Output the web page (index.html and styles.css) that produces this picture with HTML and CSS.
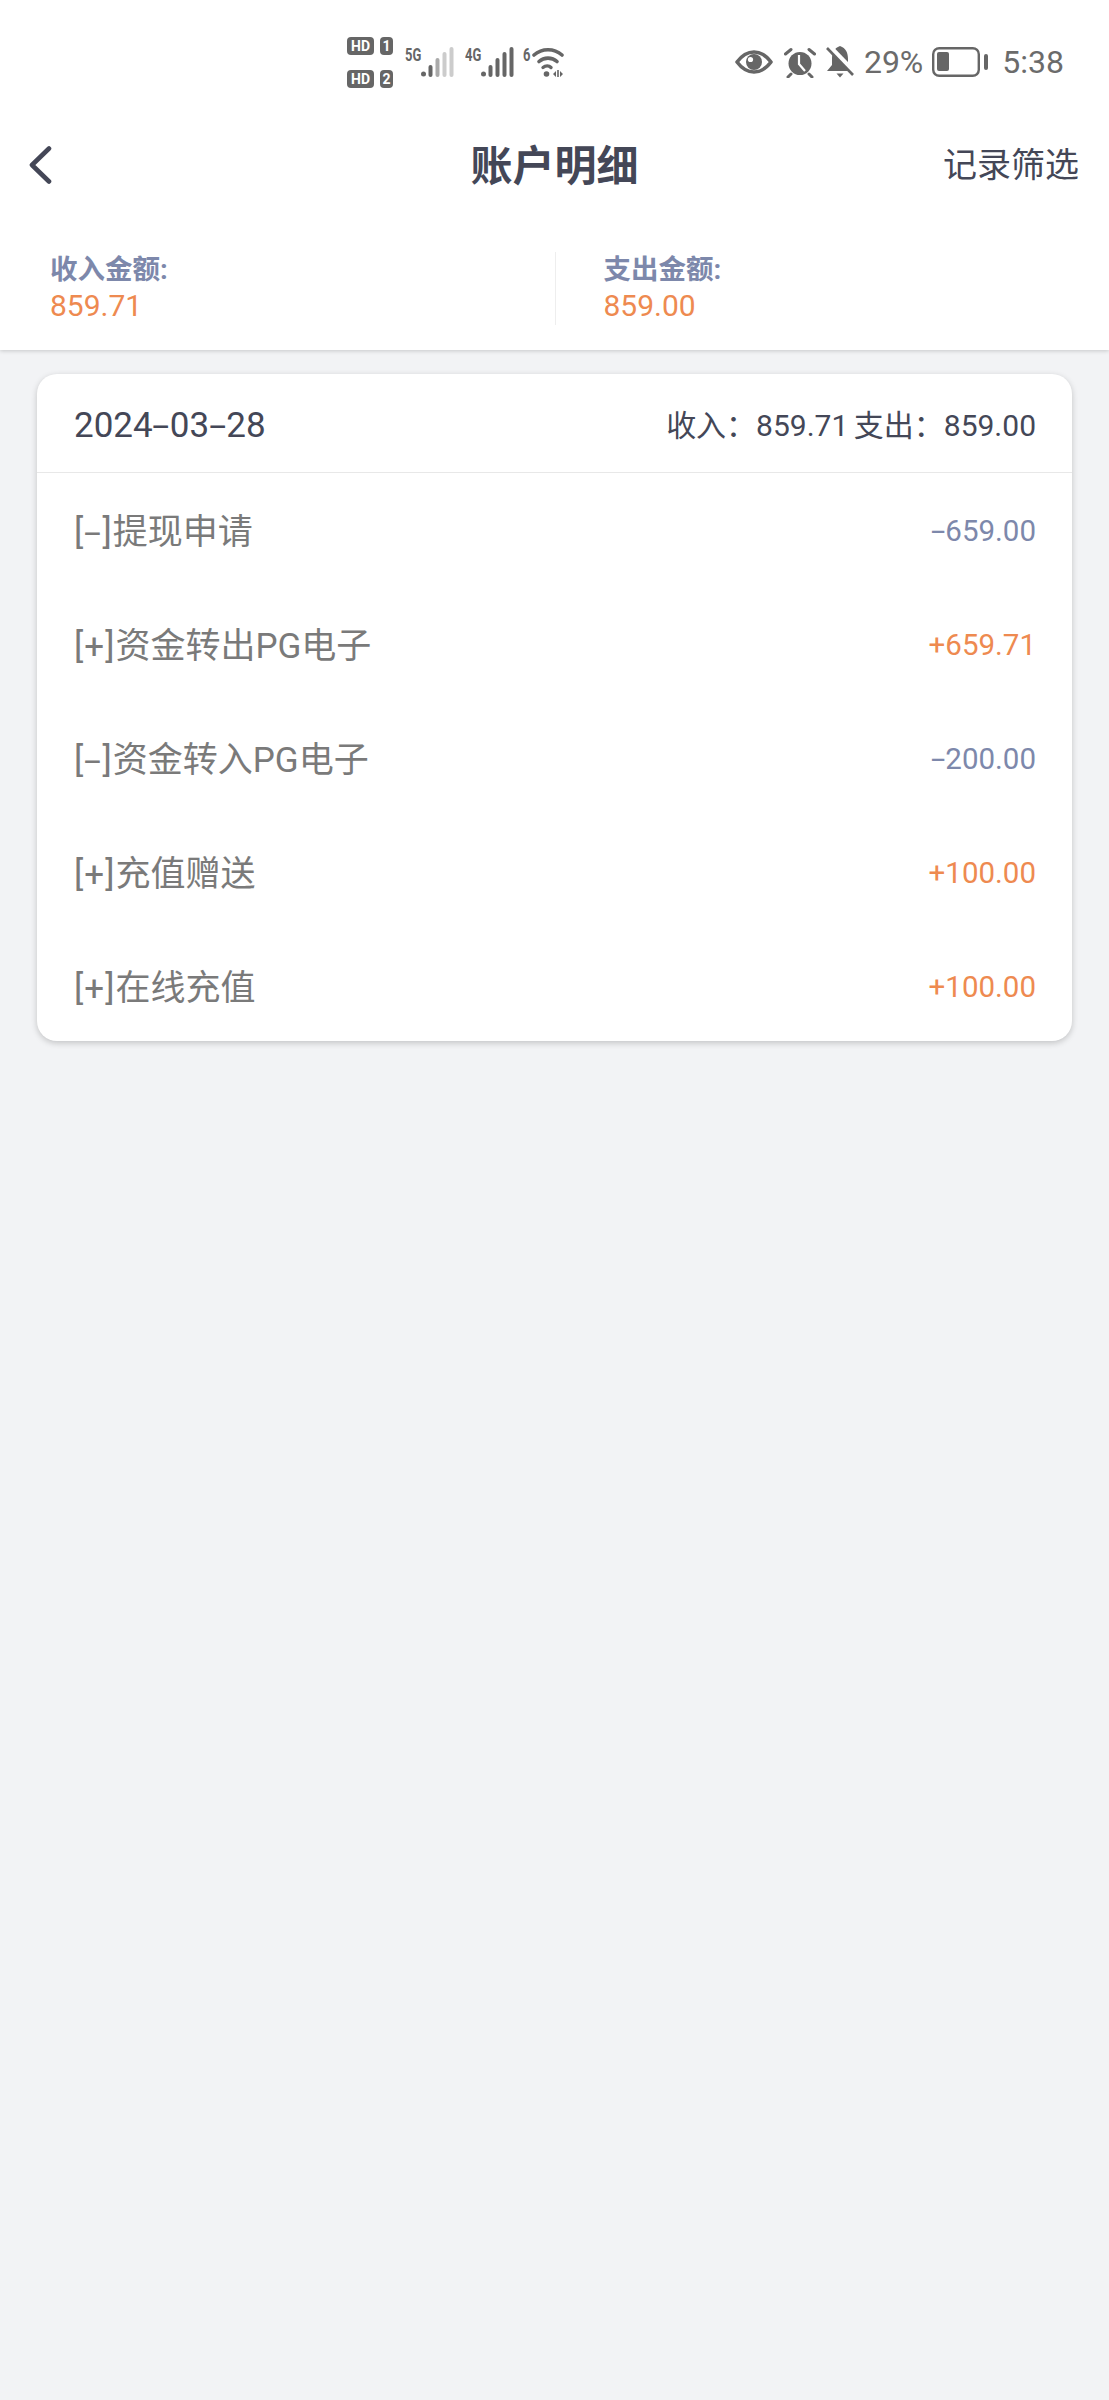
FILE: index.html
```html
<!DOCTYPE html>
<html lang="zh-CN">
<head>
    <meta charset="UTF-8">
    <meta name="viewport" content="width=device-width, initial-scale=1.0">
    <title>账户明细</title>
    <link rel="stylesheet" href="styles.css">
</head>
<body>
    <!-- Status bar -->
    <div class="status-bar">
        <div class="status-net">
            <div class="sim-col">
                <div class="sim-row"><span class="hd">HD</span><span class="sim-no">1</span></div>
                <div class="sim-row"><span class="hd">HD</span><span class="sim-no">2</span></div>
            </div>
            <div class="signal">
                <span class="net-label">5G</span>
                <svg width="33" height="30" viewBox="0 0 33 30">
                    <circle cx="2.5" cy="27" r="2.5" fill="#666"/>
                    <rect x="7.5" y="18" width="4" height="12" rx="2" fill="#666"/>
                    <rect x="14.5" y="11" width="4" height="19" rx="2" fill="#aaa"/>
                    <rect x="21.5" y="5" width="4" height="25" rx="2" fill="#ccc"/>
                    <rect x="28.5" y="0" width="4" height="30" rx="2" fill="#ccc"/>
                </svg>
            </div>
            <div class="signal">
                <span class="net-label">4G</span>
                <svg width="33" height="30" viewBox="0 0 33 30">
                    <circle cx="2.5" cy="27" r="2.5" fill="#666"/>
                    <rect x="7.5" y="18" width="4" height="12" rx="2" fill="#666"/>
                    <rect x="14.5" y="11" width="4" height="19" rx="2" fill="#666"/>
                    <rect x="21.5" y="5" width="4" height="25" rx="2" fill="#666"/>
                    <rect x="28.5" y="0" width="4" height="30" rx="2" fill="#666"/>
                </svg>
            </div>
            <div class="signal wifi">
                <span class="net-label six">6</span>
                <svg width="32" height="30" viewBox="0 0 32 30">
                    <path d="M2 8 C10 1 22 1 30 8" fill="none" stroke="#666" stroke-width="3.6" stroke-linecap="round"/>
                    <path d="M7 14.5 C12 10 20 10 25 14.5" fill="none" stroke="#666" stroke-width="3.6" stroke-linecap="round"/>
                    <path d="M11 20.5 C13.5 18.5 17 18.5 19 20.5" fill="none" stroke="#666" stroke-width="3.4" stroke-linecap="round"/>
                    <circle cx="14.5" cy="27" r="2.8" fill="#666"/>
                    <path d="M21 27 L24 24 V30 Z M28 24 L31 27 L28 30 Z" fill="#666"/>
                    <rect x="25.2" y="23" width="1.6" height="7" fill="#666"/>
                </svg>
            </div>
        </div>
        <div class="status-right">
            <svg class="ico-eye" width="38" height="24" viewBox="0 0 38 24">
                <path d="M2 12 C8 4 14 2 19 2 C24 2 30 4 36 12 C30 20 24 22 19 22 C14 22 8 20 2 12 Z" fill="none" stroke="#666" stroke-width="3.6" stroke-linejoin="round"/>
                <circle cx="19" cy="12" r="8" fill="#666"/>
                <circle cx="15.5" cy="9.5" r="2.6" fill="#fff"/>
            </svg>
            <svg class="ico-alarm" width="32" height="31" viewBox="0 0 32 31">
                <circle cx="16" cy="16.5" r="11.5" fill="#666"/>
                <path d="M15 8 V17 L21 24" fill="none" stroke="#fff" stroke-width="2.2"/>
                <path d="M1.5 7 L7 2.5 M30.5 7 L25 2.5 M7 27 L4 30 M25 27 L28 30" stroke="#666" stroke-width="3" stroke-linecap="round"/>
            </svg>
            <svg class="ico-bell" width="28" height="32" viewBox="0 0 28 32">
                <path d="M14 0 C8 2 6 7 6 13 V19 L1 25 H27 L22 19 V13 C22 7 20 2 14 0 Z" fill="#666"/>
                <path d="M10.5 27.5 H17.5 L14 31.5 Z" fill="#666"/>
                <path d="M3 0 L29 27" stroke="#fff" stroke-width="5"/>
                <path d="M1 2 L27 29" stroke="#666" stroke-width="2.6"/>
            </svg>
            <span class="batt-pct">29%</span>
            <svg class="ico-batt" width="56" height="30" viewBox="0 0 56 30">
                <rect x="1.2" y="1.2" width="45.6" height="27.6" rx="6" fill="none" stroke="#666" stroke-width="2.4"/>
                <rect x="5" y="5" width="12" height="19" rx="2" fill="#666"/>
                <rect x="52" y="7" width="4" height="16" rx="2" fill="#666"/>
            </svg>
            <span class="clock">5:38</span>
        </div>
    </div>

    <!-- Title bar and totals -->
    <div class="top-panel">
        <div class="nav-bar">
            <svg class="back" width="24" height="38" viewBox="0 0 24 38">
                <path d="M21 2.5 L4 19 L21 35.5" fill="none" stroke="#444757" stroke-width="4.6" stroke-linecap="round" stroke-linejoin="round"/>
            </svg>
            <h1 class="nav-title">账户明细</h1>
            <span class="nav-action">记录筛选</span>
        </div>
        <div class="totals">
            <div class="total-col">
                <div class="total-label">收入金额:</div>
                <div class="total-value">859.71</div>
            </div>
            <div class="total-col">
                <div class="total-label">支出金额:</div>
                <div class="total-value">859.00</div>
            </div>
        </div>
    </div>

    <!-- Records of one day -->
    <div class="day-card">
        <div class="day-head">
            <span class="day-date">2024<span class="dash">-</span>03<span class="dash">-</span>28</span>
            <span class="day-sum">收入：859.71 支出：859.00</span>
        </div>
        <div class="record">
            <span class="record-name"><span class="tag">[<span class="dash">-</span>]</span>提现申请</span>
            <span class="record-amount minus"><span class="dash">-</span>659.00</span>
        </div>
        <div class="record">
            <span class="record-name"><span class="tag">[+]</span>资金转出PG电子</span>
            <span class="record-amount plus">+659.71</span>
        </div>
        <div class="record">
            <span class="record-name"><span class="tag">[<span class="dash">-</span>]</span>资金转入PG电子</span>
            <span class="record-amount minus"><span class="dash">-</span>200.00</span>
        </div>
        <div class="record">
            <span class="record-name"><span class="tag">[+]</span>充值赠送</span>
            <span class="record-amount plus">+100.00</span>
        </div>
        <div class="record">
            <span class="record-name"><span class="tag">[+]</span>在线充值</span>
            <span class="record-amount plus">+100.00</span>
        </div>
    </div>
</body>
</html>
```

FILE: styles.css
```css
body {
    margin: 0;
    min-height: 2400px;
    background-color: #f2f3f5;
    font-family: Roboto, "Noto Sans CJK SC", sans-serif;
    color: #444757;
}

/* Status bar */
.status-bar {
    height: 110px;
    background: #fff;
    display: flex;
    justify-content: space-between;
    align-items: flex-start;
    padding: 37px 45px 0 347px;
    box-sizing: border-box;
    color: #666;
    position: relative;
    z-index: 1;
}
.status-net {
    display: flex;
}
.sim-col {
    display: flex;
    flex-direction: column;
    gap: 15px;
}
.sim-row {
    display: flex;
    gap: 6px;
}
.hd, .sim-no {
    background: #666;
    color: #fff;
    font-size: 14px;
    font-weight: 700;
    line-height: 18px;
    height: 18px;
    border-radius: 4px;
    text-align: center;
}
.hd {
    width: 27px;
}
.sim-no {
    width: 13px;
}
.signal {
    display: flex;
    align-items: flex-start;
    margin: 10px 0 0 12px;
}
.signal + .signal {
    margin-left: 11px;
}
.signal + .wifi {
    margin-left: 9px;
}
.net-label {
    width: 16px;
    font-size: 18px;
    font-weight: 700;
    line-height: 16px;
    color: #666;
    transform: scaleX(0.72);
    transform-origin: left;
}
.six {
    width: 9px;
}
.status-right {
    display: flex;
    align-items: center;
    height: 32px;
    margin-top: 9px;
    font-size: 32px;
    color: #6b6b6b;
}
.ico-eye {
    margin-right: 11px;
}
.ico-alarm {
    margin-right: 10px;
}
.ico-bell {
    margin-right: 10px;
}
.batt-pct {
    margin-right: 9px;
}
.ico-batt {
    margin-right: 14px;
}

/* Title bar */
.top-panel {
    background: #fff;
    height: 240px;
    box-shadow: 0 1px 4px rgba(0, 0, 0, 0.18);
}
.nav-bar {
    height: 104px;
    display: flex;
    align-items: center;
    justify-content: space-between;
    padding: 0 30px 0 28px;
    position: relative;
}
.back {
    margin-top: 6px;
}
.nav-title {
    margin: 0;
    font-size: 42px;
    font-weight: 700;
    position: absolute;
    left: 0;
    right: 0;
    text-align: center;
}
.nav-action {
    font-size: 34px;
}

/* Income and expense totals */
.totals {
    display: flex;
    padding-top: 38px;
}
.total-col {
    flex: 0 0 50%;
    padding-left: 50px;
    box-sizing: border-box;
    height: 73px;
}
.total-col + .total-col {
    border-left: 1px solid #eeeeee;
    padding-left: 48px;
}
.total-label {
    font-size: 27.5px;
    font-weight: 700;
    line-height: 36px;
    color: #7d88ab;
}
.total-value {
    font-size: 30px;
    line-height: 36px;
    color: #ee8a50;
}

/* Day card */
.day-card {
    margin: 24px 37px 0;
    background: #fff;
    border-radius: 20px;
    box-shadow: 0 2px 6px rgba(0, 0, 0, 0.2);
    height: 667px;
}
.day-head {
    height: 99px;
    box-sizing: border-box;
    border-bottom: 1px solid #e8e8e8;
    padding: 0 36px 0 37px;
    display: flex;
    align-items: center;
    justify-content: space-between;
}
.day-date {
    font-size: 35px;
    padding-top: 4px;
}
.day-sum {
    font-size: 30px;
    word-spacing: -2px;
}
.record {
    height: 114px;
    padding: 0 36px 0 37px;
    display: flex;
    align-items: center;
    justify-content: space-between;
}
.record-name {
    font-size: 35px;
    color: #7a7a7a;
    padding-bottom: 3px;
}
.tag {
    letter-spacing: 1px;
}
.record-amount {
    font-size: 29.5px;
    padding-top: 2px;
}
/* hyphens in this UI font are drawn long, about as wide as a plus */
.dash {
    display: inline-block;
    transform: scaleX(1.75);
    margin: 0 0.107em;
}
.minus {
    color: #7d88ab;
}
.plus {
    color: #ee8a50;
}
```
